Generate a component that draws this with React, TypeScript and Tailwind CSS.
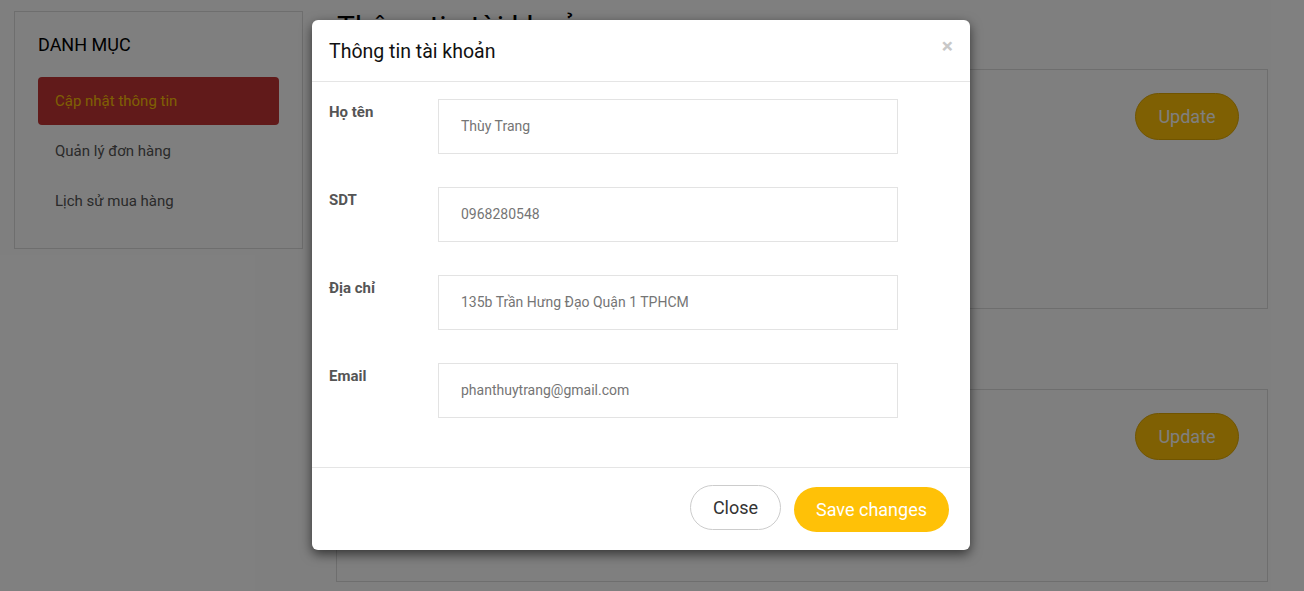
import React from "react";

const fields = [
  { label: "Họ tên", value: "Thùy Trang" },
  { label: "SDT", value: "0968280548" },
  { label: "Địa chỉ", value: "135b Trần Hưng Đạo Quận 1 TPHCM" },
  { label: "Email", value: "phanthuytrang@gmail.com" },
];

export default function App() {
  return (
    <div
      className="relative w-[1304px] h-[591px] overflow-hidden bg-white"
      style={{ fontFamily: "Roboto, 'Liberation Sans', sans-serif" }}
    >
      {/* Page behind the modal */}
      <div className="flex gap-[33px] pl-[14px] pt-[11px]">
        {/* Sidebar */}
        <aside className="w-[289px] h-[238px] border border-[#dddddd] px-[23px] pt-[21px]">
          <h2 className="text-[18px] leading-[24px] text-black">DANH MỤC</h2>
          <ul className="mt-[20px] text-[15px]">
            <li className="h-[48px] flex items-center px-[17px] rounded bg-[#c23434] text-[#ffc107]">
              Cập nhật thông tin
            </li>
            <li className="mt-px h-[50px] flex items-center px-[17px] text-[#555]">Quản lý đơn hàng</li>
            <li className="h-[50px] flex items-center px-[17px] text-[#555]">Lịch sử mua hàng</li>
          </ul>
        </aside>

        {/* Main content */}
        <main className="w-[932px] -mt-[4px]">
          <h1 className="text-[30px] leading-[40px] text-black pl-px">Thông tin tài khoản</h1>
          <div className="mt-[22px] h-[240px] border border-[#dddddd] flex justify-end items-start pt-[23px] pr-[28px]">
            <button className="w-[104px] h-[47px] rounded-full bg-[#ffc107] border border-[#e0a800] text-white text-[18px]">
              Update
            </button>
          </div>
          <div className="mt-[80px] h-[193px] border border-[#dddddd] flex justify-end items-start pt-[23px] pr-[28px]">
            <button className="w-[104px] h-[47px] rounded-full bg-[#ffc107] border border-[#e0a800] text-white text-[18px]">
              Update
            </button>
          </div>
        </main>
      </div>

      {/* Backdrop */}
      <div className="absolute inset-0 bg-black/50" />

      {/* Modal */}
      <div className="absolute left-[312px] top-[20px] w-[658px] h-[530px] bg-white rounded-[6px] shadow-[0_4px_12px_rgba(0,0,0,0.6)] flex flex-col">
        <div className="h-[62px] border-b border-[#e5e5e5] flex items-center justify-between pl-[17px] pr-[17px]">
          <h3 className="text-[19.5px] text-[#111] pt-[3px]">Thông tin tài khoản</h3>
          <button className="text-[21px] font-bold leading-none text-[#c8c8c8] -mt-[8px]">×</button>
        </div>

        <div className="flex-1 pl-[17px] pt-[17px]">
          {fields.map((f) => (
            <div key={f.label} className="flex mb-[33px]">
              <label className="w-[109px] pt-[2px] text-[15px] font-bold text-[#555]">{f.label}</label>
              <div className="w-[460px] h-[55px] border border-[#e3e3e3] flex items-center px-[22px] text-[14px] text-[#757575]">
                {f.value}
              </div>
            </div>
          ))}
        </div>

        <div className="h-[83px] border-t border-[#e5e5e5] flex items-center justify-end gap-[13px] pr-[21px]">
          <button className="w-[91px] h-[45px] rounded-full border border-[#cccccc] text-[18px] text-[#333] -mt-[3px]">
            Close
          </button>
          <button className="w-[155px] h-[45px] rounded-full bg-[#ffc107] text-[18px] text-white">
            Save changes
          </button>
        </div>
      </div>
    </div>
  );
}
